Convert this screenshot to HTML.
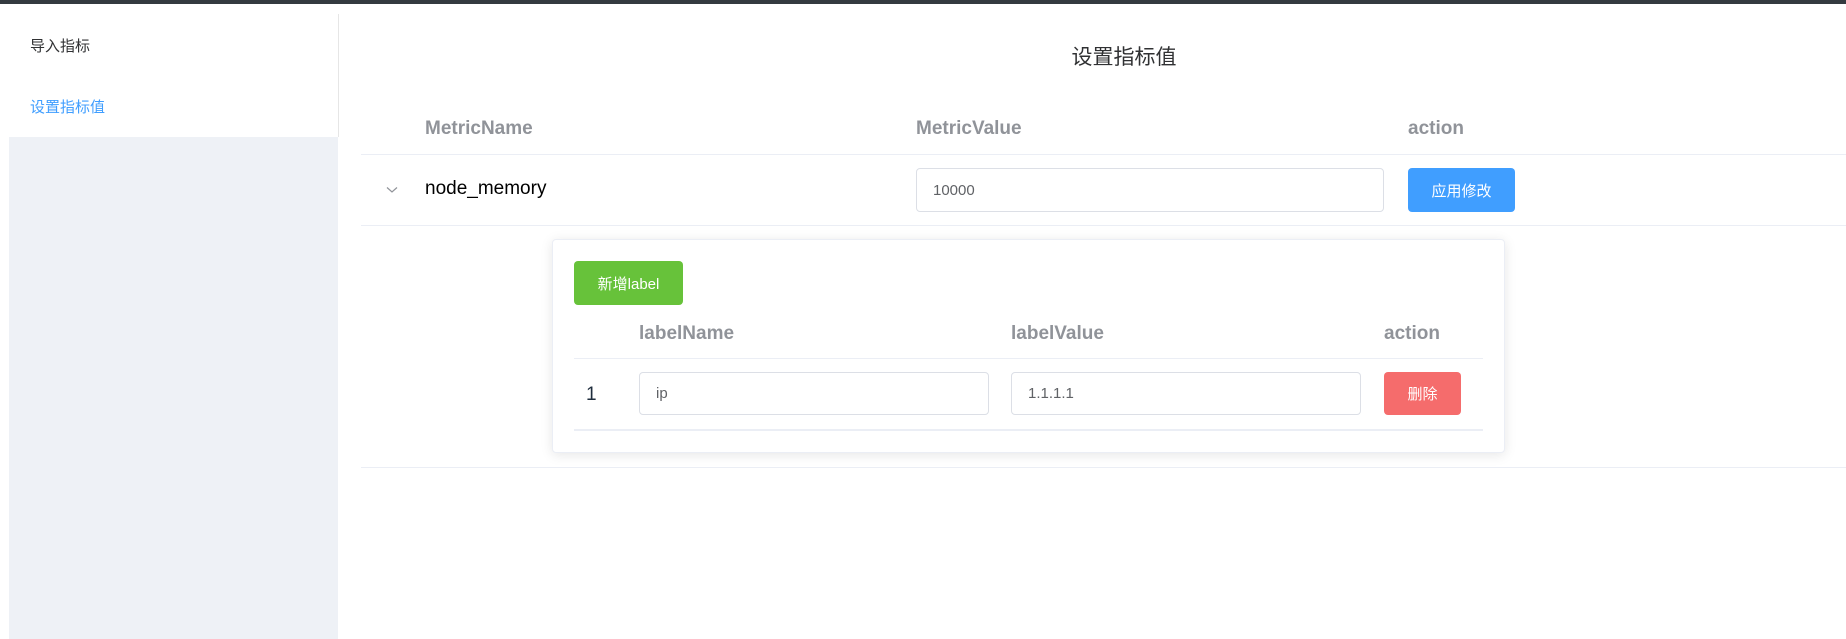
<!DOCTYPE html>
<html><head><meta charset="utf-8"><style>
*{box-sizing:border-box;margin:0;padding:0}
body{width:1846px;height:639px;overflow:hidden;background:#fff;font-family:"Liberation Sans","Noto Sans CJK SC",sans-serif;position:relative}
.a{position:absolute}
.h{color:#909399;font-weight:bold;font-size:19px}
.line{position:absolute;height:1px;background:#ebeef5}
.inp{position:absolute;border:1px solid #dcdfe6;border-radius:4px;background:#fff;font-size:15px;color:#606266;padding-left:16px;display:flex;align-items:center}
.btn{position:absolute;border-radius:4px;color:#fff;font-size:15px;display:flex;align-items:center;justify-content:center}
</style></head><body>
<div class="a" style="left:0;top:0;width:1846px;height:4px;background:#343a40"></div>
<div class="a" style="left:9px;top:137px;width:329px;height:502px;background:#eef1f6"></div>
<div class="a" style="left:338px;top:14px;width:1px;height:123px;background:#e6e6e6"></div>
<div class="a" style="left:30px;top:35px;font-size:15px;color:#303133">导入指标</div>
<div class="a" style="left:30px;top:96px;font-size:15px;color:#409eff">设置指标值</div>
<div class="a" style="left:0;width:2248px;top:41px;text-align:center;font-size:21px;color:#303133">设置指标值</div>
<div class="a h" style="left:425px;top:118px">MetricName</div>
<div class="a h" style="left:916px;top:118px">MetricValue</div>
<div class="a h" style="left:1408px;top:118px">action</div>
<div class="line" style="left:361px;right:0;top:154px"></div>
<svg class="a" style="left:386px;top:186px" width="12" height="8"><path d="M1 1.5 L6 6 L11 1.5" fill="none" stroke="#909399" stroke-width="1.2"/></svg>
<div class="a" style="left:425px;top:178px;font-size:19px;color:#000">node_memory</div>
<div class="inp" style="left:916px;top:168px;width:468px;height:44px">10000</div>
<div class="btn" style="left:1408px;top:168px;width:107px;height:44px;background:#409eff">应用修改</div>
<div class="line" style="left:361px;right:0;top:225px"></div>
<div class="a" style="left:552px;top:239px;width:953px;height:214px;border:1px solid #ebeef5;border-radius:4px;box-shadow:0 2px 12px rgba(0,0,0,.1);background:#fff"></div>
<div class="btn" style="left:574px;top:261px;width:109px;height:44px;background:#67c23a">新增label</div>
<div class="a h" style="left:639px;top:323px">labelName</div>
<div class="a h" style="left:1011px;top:323px">labelValue</div>
<div class="a h" style="left:1384px;top:323px">action</div>
<div class="line" style="left:574px;width:909px;top:358px"></div>
<div class="a" style="left:586px;top:384px;font-size:19px;color:#1f2d3d">1</div>
<div class="inp" style="left:639px;top:372px;width:350px;height:43px">ip</div>
<div class="inp" style="left:1011px;top:372px;width:350px;height:43px">1.1.1.1</div>
<div class="btn" style="left:1384px;top:372px;width:77px;height:43px;background:#f56c6c">删除</div>
<div class="a" style="left:574px;top:429px;width:909px;height:2px;background:#ebeef5"></div>
<div class="line" style="left:361px;right:0;top:467px"></div>
</body></html>
